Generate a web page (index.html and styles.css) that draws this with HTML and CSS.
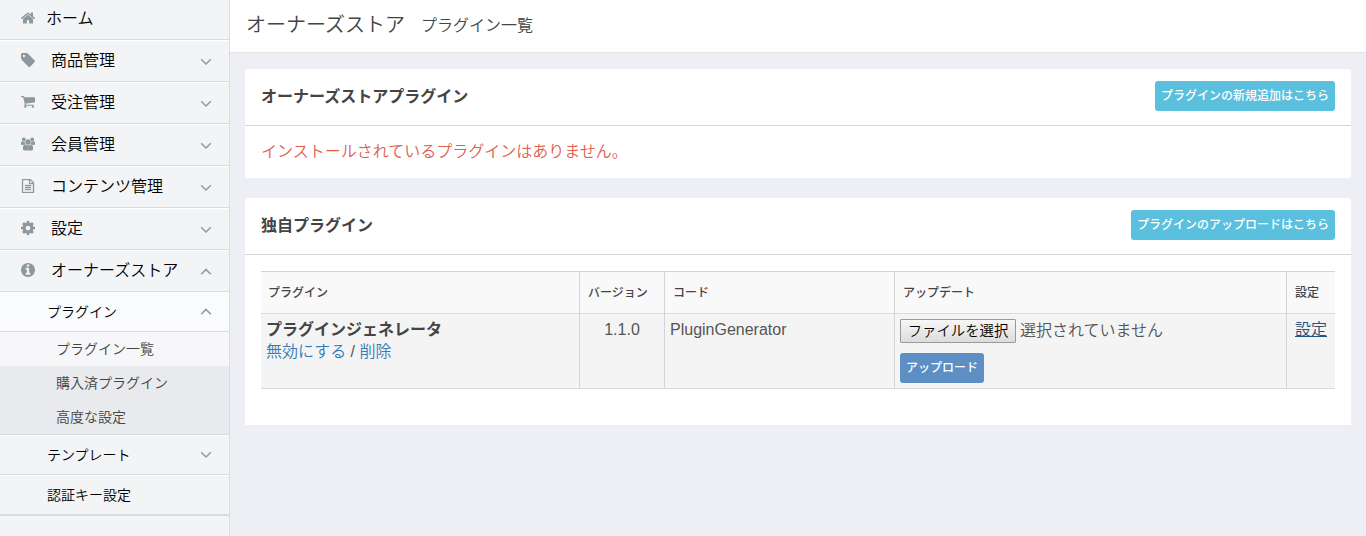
FILE: index.html
```html
<!DOCTYPE html>
<html lang="ja">
<head>
<meta charset="utf-8">
<title>オーナーズストア プラグイン一覧</title>
<link rel="stylesheet" href="styles.css">
</head>
<body>
<svg class="defs" width="0" height="0">
  <symbol id="down" viewBox="0 0 12 8"><path d="M1.200 1.200L6 6L10.800 1.200"/></symbol>
  <symbol id="up" viewBox="0 0 12 8"><path d="M1.200 6.200L6 1.400L10.800 6.200"/></symbol>
</svg>
<div class="layout">
  <nav class="side">
    <a class="item home"><svg class="icon" viewBox="89 253 1614 1283"><path d="M1472 992v480q0 26-19 45t-45 19h-384v-384h-256v384h-384q-26 0-45-19t-19-45v-480q0-1 .5-3t.5-3l575-474 575 474q1 2 1 6zm223-69l-62 74q-8 9-21 11h-3q-13 0-21-7l-692-577-692 577q-12 8-24 7-13-2-21-11l-62-74q-8-10-7-23.500t11-21.500l719-599q32-26 76-26t76 26l244 204v-195q0-14 9-23t23-9h192q14 0 23 9t9 23v408l219 182q10 8 11 21.500t-7 23.500z"/></svg><span>ホーム</span></a>
    <a class="item"><svg class="icon" viewBox="128 128 1515 1515"><path d="M576 448q0-53-37.500-90.500t-90.500-37.500-90.500 37.500-37.500 90.500 37.500 90.500 90.500 37.500 90.500-37.500 37.500-90.500zm1067 576q0 53-37 90l-491 492q-39 37-91 37-53 0-90-37l-715-716q-38-37-64.500-101t-26.500-117v-416q0-52 38-90t90-38h416q53 0 117 26.500t102 64.500l715 714q37 39 37 91z"/></svg><span>商品管理</span><svg class="chev"><use href="#down"/></svg></a>
    <a class="item"><svg class="icon" viewBox="64 256 1664 1408"><path d="M704 1536q0 52-38 90t-90 38-90-38-38-90 38-90 90-38 90 38 38 90zm896 0q0 52-38 90t-90 38-90-38-38-90 38-90 90-38 90 38 38 90zm128-1088v512q0 24-16.500 42.500t-40.500 21.500l-1044 122q13 60 13 70 0 16-24 64h920q26 0 45 19t19 45-19 45-45 19h-1024q-26 0-45-19t-19-45q0-11 8-31.500t16-36 21.500-40 15.500-29.500l-177-823h-204q-26 0-45-19t-19-45 19-45 45-19h256q16 0 28.500 6.500t19.500 15.500 13 24.500 8 26 5.500 29.500 4.500 26h1201q26 0 45 19t19 45z"/></svg><span>受注管理</span><svg class="chev"><use href="#down"/></svg></a>
    <a class="item"><svg class="icon" viewBox="0 0 1920 1792"><path d="M593 896q-162 5-265 128h-134q-82 0-138-40.500t-56-118.500q0-353 124-353 6 0 43.500 21t97.500 42.500 119 21.500q67 0 133-23-5 37-5 66 0 159 81 286zm1071 637q0 120-73 189.500t-194 69.500h-874q-121 0-194-69.500t-73-189.500q0-53 3.500-103.500t14-109 26.500-108.500 43-97.500 62-81 85.500-53.500 111.500-20q10 0 43 21.500t73 48 107 48 135 21.500 135-21.500 107-48 73-48 43-21.500q61 0 111.500 20t85.500 53.500 62 81 43 97.500 26.500 108.500 14 109 3.500 103.500zm-1024-1277q0 106-75 181t-181 75-181-75-75-181 75-181 181-75 181 75 75 181zm704 384q0 159-112.500 271.500t-271.500 112.500-271.500-112.500-112.500-271.500 112.500-271.500 271.500-112.500 271.500 112.500 112.500 271.500zm576 225q0 78-56 118.500t-138 40.500h-134q-103-123-265-128 81-127 81-286 0-29-5-66 66 23 133 23 59 0 119-21.500t97.500-42.500 43.500-21q124 0 124 353zm-128-609q0 106-75 181t-181 75-181-75-75-181 75-181 181-75 181 75 75 181z"/></svg><span>会員管理</span><svg class="chev"><use href="#down"/></svg></a>
    <a class="item"><svg class="icon doc" viewBox="128 0 1536 1792"><path d="M1596 380q28 28 48 76t20 88v1152q0 40-28 68t-68 28h-1344q-40 0-68-28t-28-68v-1600q0-40 28-68t68-28h896q40 0 88 20t76 48zm-444-244v376h376q-10-29-22-41l-313-313q-12-12-41-22zm384 1528v-1024h-416q-40 0-68-28t-28-68v-416h-768v1536h1280zm-1024-864q0-14 9-23t23-9h704q14 0 23 9t9 23v64q0 14-9 23t-23 9h-704q-14 0-23-9t-9-23zm736 224q14 0 23 9t9 23v64q0 14-9 23t-23 9h-704q-14 0-23-9t-9-23v-64q0-14 9-23t23-9zm0 256q14 0 23 9t9 23v64q0 14-9 23t-23 9h-704q-14 0-23-9t-9-23v-64q0-14 9-23t23-9z"/></svg><span>コンテンツ管理</span><svg class="chev"><use href="#down"/></svg></a>
    <a class="item"><svg class="icon" viewBox="128 128 1536 1536"><path d="M1152 896q0-106-75-181t-181-75-181 75-75 181 75 181 181 75 181-75 75-181zm512-109v222q0 12-8 23t-20 13l-185 28q-19 54-39 91 35 50 107 138 10 12 10 25t-9 23q-27 37-99 108t-94 71q-12 0-26-9l-138-108q-44 23-91 38-16 136-29 186-7 28-36 28h-222q-14 0-24.500-8.500t-11.500-21.500l-28-184q-49-16-90-37l-141 107q-10 9-25 9-14 0-25-11-126-114-165-168-7-10-7-23 0-12 8-23 15-21 51-66.500t54-70.500q-27-50-41-99l-183-27q-13-2-21-12.500t-8-23.500v-222q0-12 8-23t19-13l186-28q14-46 39-92-40-57-107-138-10-12-10-24 0-10 9-23 26-36 98.500-107.500t94.500-71.500q13 0 26 10l138 107q44-23 91-38 16-136 29-186 7-28 36-28h222q14 0 24.500 8.500t11.500 21.500l28 184q49 16 90 37l142-107q9-9 24-9 13 0 25 10 129 119 165 170 7 8 7 22 0 12-8 23-15 21-51 66.500t-54 70.500q26 50 41 98l183 28q13 2 21 12.500t8 23.500z"/></svg><span>設定</span><svg class="chev"><use href="#down"/></svg></a>
    <a class="item"><svg class="icon" viewBox="128 128 1536 1536"><path d="M1152 1376v-160q0-14-9-23t-23-9h-96v-512q0-14-9-23t-23-9h-320q-14 0-23 9t-9 23v160q0 14 9 23t23 9h96v320h-96q-14 0-23 9t-9 23v160q0 14 9 23t23 9h448q14 0 23-9t9-23zm-128-896v-160q0-14-9-23t-23-9h-192q-14 0-23 9t-9 23v160q0 14 9 23t23 9h192q14 0 23-9t9-23zm640 416q0 209-103 385.500t-279.500 279.500-385.500 103-385.500-103-279.500-279.500-103-385.500 103-385.500 279.500-279.500 385.500-103 385.500 103 279.500 279.500 103 385.500z"/></svg><span>オーナーズストア</span><svg class="chev"><use href="#up"/></svg></a>
    <a class="item sub open"><span>プラグイン</span><svg class="chev"><use href="#up"/></svg></a>
    <div class="leaves">
      <a class="leaf current">プラグイン一覧</a>
      <a class="leaf">購入済プラグイン</a>
      <a class="leaf">高度な設定</a>
    </div>
    <a class="item sub"><span>テンプレート</span><svg class="chev"><use href="#down"/></svg></a>
    <a class="item sub last"><span>認証キー設定</span></a>
  </nav>
  <main class="main">
    <header class="title"><h1>オーナーズストア</h1><span>プラグイン一覧</span></header>
    <div class="content">
      <section class="box">
        <div class="box-head"><h2>オーナーズストアプラグイン</h2><a class="btn">プラグインの新規追加はこちら</a></div>
        <p class="empty">インストールされているプラグインはありません。</p>
      </section>
      <section class="box">
        <div class="box-head"><h2>独自プラグイン</h2><a class="btn">プラグインのアップロードはこちら</a></div>
        <div class="table">
          <div class="row head"><div>プラグイン</div><div>バージョン</div><div>コード</div><div>アップデート</div><div>設定</div></div>
          <div class="row body">
            <div><b>プラグインジェネレータ</b><p class="actions"><a>無効にする</a> / <a>削除</a></p></div>
            <div class="version">1.1.0</div>
            <div>PluginGenerator</div>
            <div class="update"><div class="file"><button class="choose">ファイルを選択</button><span>選択されていません</span></div><a class="btn upload">アップロード</a></div>
            <div class="conf"><a>設定</a></div>
          </div>
        </div>
      </section>
    </div>
  </main>
</div>
</body>
</html>
```

FILE: styles.css
```css
* { box-sizing: border-box; }
body {
  margin: 0;
  font: 350 16px/22px "Liberation Sans", "Noto Sans CJK JP", sans-serif;
  color: #444;
  background: #eeeff4;
}
h1, h2, p { margin: 0; }
.defs { position: absolute; }
.layout { display: flex; height: 536px; overflow: hidden; }

.side {
  width: 230px;
  flex: none;
  background: #f2f4f6;
  border-right: 1px solid #dbdee0;
  color: #000;
}
.item {
  display: flex;
  align-items: center;
  height: 42px;
  padding: 0 17px 0 21px;
  border-top: 1px solid #fff;
  border-bottom: 1px solid #d9dcdf;
}
.item span { flex: 1; padding-bottom: 1px; }
.icon { width: 14px; height: 14px; margin: 0 16px 2px 0; fill: #8d979e; }
.home { height: 40px; border-top: 0; }
.home .icon { margin: 0 11px 4px 0; }
.doc { stroke: #8d979e; stroke-width: 40; }
.chev {
  width: 12px;
  height: 8px;
  margin-top: 2px;
  fill: none;
  stroke: #8f9aa1;
  stroke-width: 1.5;
}
.sub { height: 40px; padding-left: 47px; font-size: 14px; }
.sub span { padding: 0; }
.sub .chev { margin-top: 0; }
.open { background: #fafbfd; }
.leaves { border-bottom: 1px solid #d9dcdf; background: #e9eaee; }
.leaf {
  display: block;
  height: 34px;
  padding-left: 56px;
  font-size: 14px;
  line-height: 34px;
  color: #444;
}
.current { background: #f7f7f9; }
.last { height: 41px; border-bottom-width: 2px; }

.main { flex: 1; }
.title {
  display: flex;
  align-items: center;
  gap: 15px;
  height: 53px;
  padding: 0 16px 2px;
  background: #fff;
  border-bottom: 1px solid #e2e3e6;
}
.title h1 { font-size: 20px; font-weight: 350; }
.title span { padding: 1px 0 0 1px; }
.content { padding: 16px 15px; }
.box { margin-bottom: 20px; background: #fff; border-radius: 3px 3px 0 0; }
.box-head {
  display: flex;
  align-items: center;
  justify-content: space-between;
  height: 57px;
  padding: 0 16px 2px;
  border-bottom: 1px solid #d0d6d8;
}
.box-head h2 { padding-top: 2px; font-size: 16px; font-weight: 700; }
.btn {
  display: block;
  height: 30px;
  padding: 0 6px;
  border-radius: 3px;
  background: #5bc0de;
  color: #fff;
  font-size: 12px;
  font-weight: 500;
  line-height: 31px;
}
.empty { height: 52px; padding: 15px 16px; color: #e0604f; }
.table { padding: 16px 16px 36px; }
.row { display: grid; grid-template-columns: 318px 85px 230px 392px 49px; }
.row > div + div { border-left: 1px solid #d0d6d8; }
.head {
  height: 43px;
  border-top: 1px solid #d0d6d8;
  border-bottom: 1px solid #d9dcdd;
  background: #f9f9f9;
  font-size: 12px;
  font-weight: 500;
  line-height: 42px;
}
.head > div { padding-left: 8px; }
.head > div:first-child { padding-left: 7px; }
.body {
  height: 75px;
  border-bottom: 1px solid #d9dcdd;
  background: #f4f4f4;
  color: #555;
}
.body > div { padding: 5px; }
.body .version { text-align: center; }
.body b { font-weight: 700; color: #444; }
.actions a { color: #337ab7; }
.file { display: flex; gap: 4px; height: 24px; }
.choose {
  width: 116px;
  height: 24px;
  padding: 0;
  border: 1px solid #999;
  border-radius: 1px;
  background: linear-gradient(#f7f7f7, #dcdcdc);
  font: inherit;
  font-size: 14.4px;
  line-height: 22px;
  color: #000;
}
.file span { line-height: 24px; }
.upload { width: 84px; margin-top: 10px; background: #5d8fc4; }
.body .conf { padding-left: 8px; }
.conf a { color: #23527c; text-decoration: underline; }
```
